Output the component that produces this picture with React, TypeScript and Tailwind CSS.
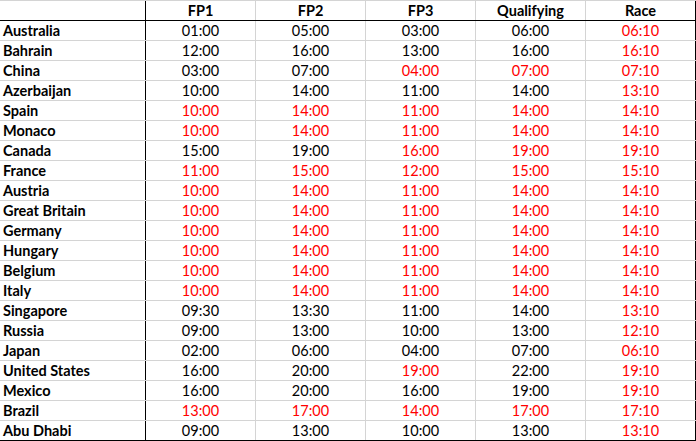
import React from "react";

type Row = { name: string; vals: string[]; red: boolean[] };

const R = true;
const B = false;

const rows: Row[] = [
  { name: "Australia", vals: ["01:00", "05:00", "03:00", "06:00", "06:10"], red: [B, B, B, B, R] },
  { name: "Bahrain", vals: ["12:00", "16:00", "13:00", "16:00", "16:10"], red: [B, B, B, B, R] },
  { name: "China", vals: ["03:00", "07:00", "04:00", "07:00", "07:10"], red: [B, B, R, R, R] },
  { name: "Azerbaijan", vals: ["10:00", "14:00", "11:00", "14:00", "13:10"], red: [B, B, B, B, R] },
  { name: "Spain", vals: ["10:00", "14:00", "11:00", "14:00", "14:10"], red: [R, R, R, R, R] },
  { name: "Monaco", vals: ["10:00", "14:00", "11:00", "14:00", "14:10"], red: [R, R, R, R, R] },
  { name: "Canada", vals: ["15:00", "19:00", "16:00", "19:00", "19:10"], red: [B, B, R, R, R] },
  { name: "France", vals: ["11:00", "15:00", "12:00", "15:00", "15:10"], red: [R, R, R, R, R] },
  { name: "Austria", vals: ["10:00", "14:00", "11:00", "14:00", "14:10"], red: [R, R, R, R, R] },
  { name: "Great Britain", vals: ["10:00", "14:00", "11:00", "14:00", "14:10"], red: [R, R, R, R, R] },
  { name: "Germany", vals: ["10:00", "14:00", "11:00", "14:00", "14:10"], red: [R, R, R, R, R] },
  { name: "Hungary", vals: ["10:00", "14:00", "11:00", "14:00", "14:10"], red: [R, R, R, R, R] },
  { name: "Belgium", vals: ["10:00", "14:00", "11:00", "14:00", "14:10"], red: [R, R, R, R, R] },
  { name: "Italy", vals: ["10:00", "14:00", "11:00", "14:00", "14:10"], red: [R, R, R, R, R] },
  { name: "Singapore", vals: ["09:30", "13:30", "11:00", "14:00", "13:10"], red: [B, B, B, B, R] },
  { name: "Russia", vals: ["09:00", "13:00", "10:00", "13:00", "12:10"], red: [B, B, B, B, R] },
  { name: "Japan", vals: ["02:00", "06:00", "04:00", "07:00", "06:10"], red: [B, B, B, B, R] },
  { name: "United States", vals: ["16:00", "20:00", "19:00", "22:00", "19:10"], red: [B, B, R, B, R] },
  { name: "Mexico", vals: ["16:00", "20:00", "16:00", "19:00", "19:10"], red: [B, B, B, B, R] },
  { name: "Brazil", vals: ["13:00", "17:00", "14:00", "17:00", "17:10"], red: [R, R, R, R, R] },
  { name: "Abu Dhabi", vals: ["09:00", "13:00", "10:00", "13:00", "13:10"], red: [B, B, B, B, R] },
];

const headers = ["FP1", "FP2", "FP3", "Qualifying", "Race"];

export default function App() {
  return (
    <div
      className="w-[696px] h-[441px] bg-white text-black text-[14.5px] leading-none overflow-hidden"
      style={{ fontFamily: "Lato, 'Open Sans', sans-serif" }}
    >
      <div className="flex h-[21px] border-t border-[#d4d4d4] border-b border-b-black">
        <div className="w-[146px] border-r border-black" />
        {headers.map((h, i) => (
          <div
            key={h}
            className={`w-[110px] flex items-center justify-center pt-[2px] font-bold ${
              i === 4 ? "border-r border-black" : "border-r border-[#d4d4d4]"
            }`}
          >
            {h}
          </div>
        ))}
      </div>
      {rows.map((r, ri) => (
        <div
          key={r.name}
          className={`flex h-[20px] border-b ${ri === rows.length - 1 ? "border-black" : "border-[#d4d4d4]"}`}
        >
          <div className="w-[146px] border-r border-black flex items-center pt-[2px] pl-[3px] font-bold">{r.name}</div>
          {r.vals.map((v, i) => (
            <div
              key={i}
              className={`w-[110px] flex items-center justify-center pt-[2px] ${
                i === 4 ? "border-r border-r-black" : "border-r border-r-[#d4d4d4]"
              } ${r.red[i] ? "text-[#ff0000]" : "text-black"}`}
            >
              {v}
            </div>
          ))}
        </div>
      ))}
    </div>
  );
}
